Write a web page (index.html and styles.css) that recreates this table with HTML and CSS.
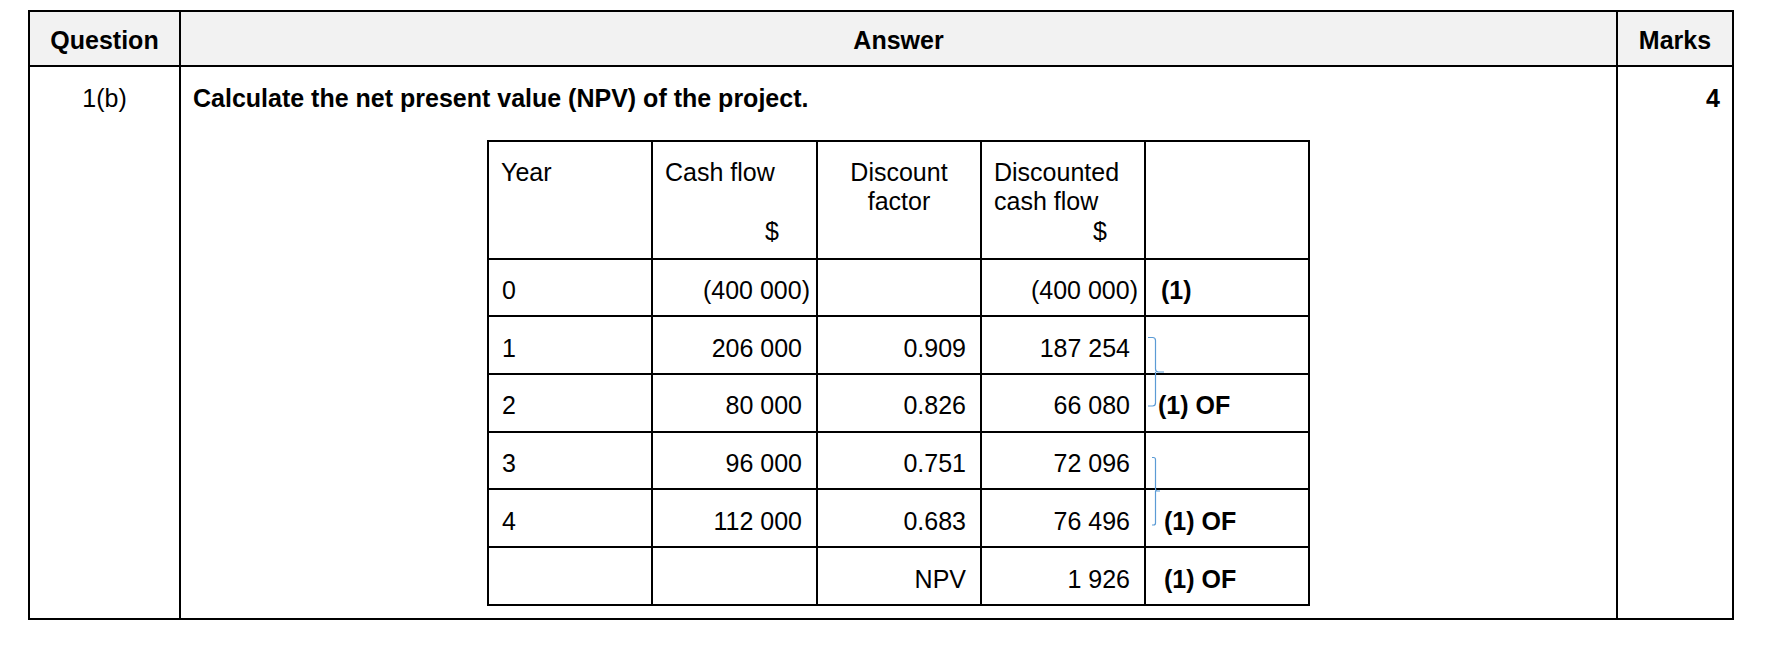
FILE: index.html
```html
<!DOCTYPE html>
<html lang="en">
<head>
<meta charset="utf-8">
<title>Mark scheme 1(b)</title>
<link rel="stylesheet" href="styles.css">
</head>
<body>
<div class="page">
  <table class="mark">
    <thead>
      <tr>
        <th class="col-q">Question</th>
        <th class="col-a">Answer</th>
        <th class="col-m">Marks</th>
      </tr>
    </thead>
    <tbody>
      <tr class="body-row">
        <td class="q">1(b)</td>
        <td class="a">
          <p class="prompt">Calculate the net present value (NPV) of the project.</p>
          <div class="calc">
            <table class="npv">
              <thead>
                <tr class="npv-head">
                  <th class="left">Year</th>
                  <th class="left">Cash flow<br>&nbsp;<span class="unit">$</span></th>
                  <th class="center">Discount<br>factor</th>
                  <th class="left">Discounted<br>cash flow<span class="unit">$</span></th>
                  <th></th>
                </tr>
              </thead>
              <tbody>
                <tr>
                  <td>0</td>
                  <td class="num"><span class="neg">(400 000)</span></td>
                  <td class="num"></td>
                  <td class="num"><span class="neg">(400 000)</span></td>
                  <td class="mk first">(1)</td>
                </tr>
                <tr>
                  <td>1</td>
                  <td class="num">206 000</td>
                  <td class="num">0.909</td>
                  <td class="num">187 254</td>
                  <td class="mk"></td>
                </tr>
                <tr>
                  <td>2</td>
                  <td class="num">80 000</td>
                  <td class="num">0.826</td>
                  <td class="num">66 080</td>
                  <td class="mk">(1) OF</td>
                </tr>
                <tr>
                  <td>3</td>
                  <td class="num">96 000</td>
                  <td class="num">0.751</td>
                  <td class="num">72 096</td>
                  <td class="mk"></td>
                </tr>
                <tr>
                  <td>4</td>
                  <td class="num">112 000</td>
                  <td class="num">0.683</td>
                  <td class="num">76 496</td>
                  <td class="mk indent">(1) OF</td>
                </tr>
                <tr>
                  <td></td>
                  <td class="num"></td>
                  <td class="num">NPV</td>
                  <td class="num">1 926</td>
                  <td class="mk indent">(1) OF</td>
                </tr>
              </tbody>
            </table>
            <svg class="braces" width="823" height="466" viewBox="0 0 823 466" aria-hidden="true">
              <path d="M661 197.5 H665.5 Q668.5 197.5 668.5 200.5 V229 Q668.5 232 671.5 232 H677 M668.5 232 V263 Q668.5 266 665.5 266 H661"/>
              <path d="M665 317.5 H666.5 Q668.5 317.5 668.5 319.5 V349 Q668.5 351 670.5 351 H673 M668.5 351 V383 Q668.5 385 666.5 385 H665"/>
            </svg>
          </div>
        </td>
        <td class="m">4</td>
      </tr>
    </tbody>
  </table>
</div>
</body>
</html>
```

FILE: styles.css
```css
html, body {
  margin: 0;
  padding: 0;
  background: #ffffff;
}

body {
  font-family: "Liberation Sans", Arial, sans-serif;
  color: #000;
  font-size: 25px;
}

.page {
  padding: 10px 0 0 28px;
}

/* ---------- outer mark-scheme table ---------- */
.mark {
  width: 1706px;
  table-layout: fixed;
  border-collapse: separate;
  border-spacing: 0;
  border-top: 2px solid #000;
  border-left: 2px solid #000;
}

.mark > thead > tr > th,
.mark > tbody > tr > td {
  box-sizing: border-box;
  border-right: 2px solid #000;
  border-bottom: 2px solid #000;
  padding: 0;
}

.mark > thead > tr > th {
  height: 55px;
  padding-top: 4px;
  background: #f2f2f2;
  font-weight: bold;
  font-size: 25px;
  text-align: center;
  vertical-align: middle;
}

.col-q { width: 151px; }
.col-a { width: 1437px; }
.col-m { width: 116px; }

.body-row > td {
  height: 553px;
  vertical-align: top;
  line-height: 29.5px;
}

.mark > tbody > tr > td.q {
  text-align: center;
  padding-top: 17px;
}

.mark > tbody > tr > td.a {
  padding: 17px 12px 0 12px;
}

.mark > tbody > tr > td.m {
  text-align: right;
  font-weight: bold;
  padding: 17px 12px 0 0;
}

.prompt {
  margin: 0;
  font-weight: bold;
  line-height: 29.5px;
}

/* ---------- NPV calculation table ---------- */
.calc {
  position: relative;
  width: 823px;
  margin: 26px auto 0 auto;
}

.npv {
  width: 823px;
  table-layout: fixed;
  border-collapse: separate;
  border-spacing: 0;
  border-top: 2px solid #000;
  border-left: 2px solid #000;
  font-size: 25px;
  line-height: 29.5px;
}

.npv th,
.npv td {
  box-sizing: border-box;
  border-right: 2px solid #000;
  border-bottom: 2px solid #000;
  width: 164px;
  font-weight: normal;
}

.npv th:nth-child(2) { width: 165px; }

.npv-head th {
  height: 118px;
  vertical-align: top;
  padding: 16px 12px 0 12px;
}

.npv-head th.left { text-align: left; }
.npv-head th.center { text-align: center; }

.unit {
  display: block;
  text-align: right;
  padding-right: 25px;
}

.npv tbody td {
  height: 57.7px;
  vertical-align: middle;
  padding: 7px 13px 0 13px;
}

.npv td.num {
  text-align: right;
  padding-right: 14px;
}

.neg {
  margin-right: -8px;
}

.npv td.mk {
  font-weight: bold;
  padding-left: 12px;
}

.npv td.mk.first {
  padding-left: 15px;
}

.npv td.mk.indent {
  padding-left: 18px;
}

.braces {
  position: absolute;
  left: 0;
  top: 0;
  pointer-events: none;
  fill: none;
  stroke: #5b9bd5;
  stroke-width: 1.2;
}
```
